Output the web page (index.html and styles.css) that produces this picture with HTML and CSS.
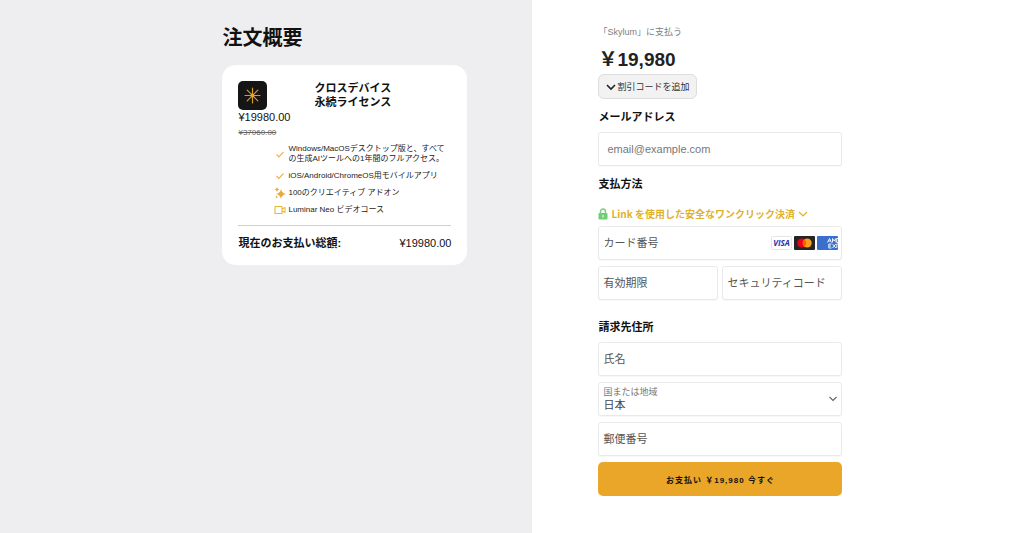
FILE: index.html
```html
<!DOCTYPE html>
<html lang="ja">
<head>
    <meta charset="UTF-8">
    <meta name="viewport" content="width=device-width, initial-scale=1.0">
    <title>注文概要</title>
    <link rel="stylesheet" href="styles.css">
</head>
<body>
    <section class="summary">
        <div class="summary-inner">
            <h1>注文概要</h1>
            <div class="card">
                <div class="product">
                    <svg class="logo" viewBox="0 0 29 29" aria-hidden="true">
                        <rect width="29" height="29" rx="5" fill="#151515"/>
                        <g stroke="#d99a26" stroke-width="1.2" stroke-linecap="round">
                            <path d="M14.5 7v15M7 14.5h15M9.2 9.2l10.6 10.6M19.8 9.2L9.2 19.8"/>
                        </g>
                        <circle cx="14.5" cy="14.5" r="2" fill="#e9a628"/>
                    </svg>
                    <h2>クロスデバイス<br>永続ライセンス</h2>
                </div>
                <div class="price">¥19980.00</div>
                <div class="old-price"><s>¥37060.00</s></div>
                <ul class="features">
                    <li>
                        <svg viewBox="0 0 12 12" aria-hidden="true"><path d="M2.5 6.5l2.3 2.3L9.5 4" fill="none" stroke="#eeb353" stroke-width="1.2"/></svg>
                        <span>Windows/MacOSデスクトップ版と、すべて<br>の生成AIツールへの1年間のフルアクセス。</span>
                    </li>
                    <li>
                        <svg viewBox="0 0 12 12" aria-hidden="true"><path d="M2.5 6l2.3 2.3L9.5 3.5" fill="none" stroke="#eeb353" stroke-width="1.2"/></svg>
                        <span>iOS/Android/ChromeOS用モバイルアプリ</span>
                    </li>
                    <li>
                        <svg viewBox="0 0 12 12" aria-hidden="true">
                            <g fill="#e8a93a">
                                <path d="M7 2Q7.8 6.200 12 7Q7.800 7.800 7 12Q6.200 7.800 2 7Q6.200 6.200 7 2z"/>
                                <path d="M3 0Q3.400 2.100 5.500 2.500Q3.400 2.900 3 5Q2.600 2.900 0.500 2.500Q2.600 2.100 3 0z"/>
                                <path d="M2.500 8.500Q2.700 9.800 4 10Q2.700 10.200 2.500 11.500Q2.300 10.200 1 10Q2.300 9.800 2.500 8.500z"/>
                            </g>
                        </svg>
                        <span>100のクリエイティブ アドオン</span>
                    </li>
                    <li>
                        <svg viewBox="0 0 12 12" aria-hidden="true"><path d="M1 2.500h7v7H1zM8 5l3-1.500v5L8 7" fill="none" stroke="#e6b83c" stroke-width="1.1" stroke-linejoin="round"/></svg>
                        <span>Luminar Neo ビデオコース</span>
                    </li>
                </ul>
                <div class="total">
                    <strong>現在のお支払い総額:</strong>
                    <span>¥19980.00</span>
                </div>
            </div>
        </div>
    </section>

    <main class="payment">
        <form class="payment-form">
            <p class="payee">「Skylum」に支払う</p>
            <p class="amount">￥19,980</p>
            <button type="button" class="discount">
                <svg viewBox="0 0 10 10" aria-hidden="true"><path d="M1 3l4 4 4-4" fill="none" stroke="#222" stroke-width="1.6"/></svg>
                割引コードを追加
            </button>

            <label class="heading" for="email">メールアドレス</label>
            <input class="field email" type="email" id="email" placeholder="email@example.com">

            <h3 class="heading">支払方法</h3>
            <button type="button" class="link-pay">
                <svg class="lock" viewBox="0 0 10 12" aria-hidden="true">
                    <path d="M2.500 6V3.500a2.500 2.500 0 0 1 5 0V6" fill="none" stroke="#7bd17f" stroke-width="1.500"/>
                    <rect x="0.500" y="5" width="9" height="6.500" rx="1" fill="#6fce74"/>
                    <path d="M5 7v2.500" stroke="#fff"/>
                </svg>
                Link を使用した安全なワンクリック決済
                <svg class="chevron" viewBox="0 0 10 10" aria-hidden="true"><path d="M1 3l4 4 4-4" fill="none" stroke="#dfb22c" stroke-width="1.200"/></svg>
            </button>
            <div class="fields">
                <div class="field-wrap">
                    <input class="field" type="text" placeholder="カード番号" aria-label="カード番号">
                    <div class="brands">
                        <svg viewBox="0 0 21 14" role="img" aria-label="Visa">
                            <rect x="0.500" y="0.500" width="20" height="13" rx="1" fill="#fff" stroke="#e6e6e6"/>
                            <text x="10.500" y="10" text-anchor="middle" class="visa-text">VISA</text>
                        </svg>
                        <svg viewBox="0 0 21 14" role="img" aria-label="Mastercard">
                            <rect width="21" height="14" rx="1" fill="#252525"/>
                            <circle cx="7.800" cy="7" r="4.500" fill="#eb001b"/>
                            <circle cx="13.200" cy="7" r="4.500" fill="#f79e1b"/>
                            <path d="M10.500 3.400a4.500 4.500 0 0 1 0 7.200a4.500 4.500 0 0 1 0-7.200z" fill="#ff5f00"/>
                        </svg>
                        <svg viewBox="0 0 21 14" role="img" aria-label="American Express">
                            <rect width="21" height="14" rx="1" fill="#3a70cc"/>
                            <g fill="none" stroke="#fff" stroke-width="0.900">
                                <path d="M10.500 6.500l2-4 2 4M11.300 5h2.400M15.500 6.500v-4l1.700 2.500 1.700-2.500v4M21 2.500h-1.200v4H21"/>
                                <path d="M14.500 8h-2.700v4h2.700M11.800 10h2.200M15.500 8l3.300 4M18.800 8l-3.300 4M21 8h-1.200v4"/>
                            </g>
                        </svg>
                    </div>
                </div>
                <div class="field-row">
                    <input class="field" type="text" placeholder="有効期限" aria-label="有効期限">
                    <input class="field" type="text" placeholder="セキュリティコード" aria-label="セキュリティコード">
                </div>
            </div>

            <h3 class="heading billing">請求先住所</h3>
            <div class="fields">
                <input class="field" type="text" placeholder="氏名" aria-label="氏名">
                <div class="field-wrap">
                    <label class="select-label" for="country">国または地域</label>
                    <select class="field country" id="country">
                        <option>日本</option>
                    </select>
                    <svg class="select-arrow" viewBox="0 0 10 10" aria-hidden="true"><path d="M1.500 3L5 6.500 8.500 3" fill="none" stroke="#666" stroke-width="1.200"/></svg>
                </div>
                <input class="field" type="text" placeholder="郵便番号" aria-label="郵便番号">
            </div>
            <button type="submit" class="submit">お支払い ￥19,980 今すぐ</button>
        </form>
    </main>
</body>
</html>
```

FILE: styles.css
```css
* {
    box-sizing: border-box;
}

body {
    margin: 0;
    min-height: 100vh;
    display: flex;
    font-family: "Liberation Sans", "Noto Sans CJK JP", sans-serif;
    background-color: #fff;
    color: #111;
}

h1, h2, h3, p, ul {
    margin: 0;
    padding: 0;
}

button, input, select {
    font-family: inherit;
}

svg {
    display: block;
    flex-shrink: 0;
}

/* order summary */
.summary {
    width: 52%;
    padding: 23px 65px 23px 20px;
    background-color: #eeeef0;
    display: flex;
    justify-content: flex-end;
}

.summary-inner {
    width: 100%;
    max-width: 245px;
}

h1 {
    font-size: 20px;
    line-height: 30px;
    font-weight: bold;
    margin-bottom: 12px;
}

.card {
    background-color: #fff;
    border-radius: 14px;
    padding: 16px 16px 15px;
}

.product {
    display: flex;
    gap: 47px;
}

.logo {
    width: 29px;
    height: 29px;
}

h2 {
    font-size: 11px;
    line-height: 14px;
    font-weight: bold;
}

.price {
    font-size: 11px;
    line-height: 15px;
}

.old-price {
    font-size: 8px;
    line-height: 16px;
    color: #666;
}

.features {
    list-style: none;
    margin: 3px 0 10px 36px;
    display: flex;
    flex-direction: column;
    gap: 7px;
}

.features li {
    display: flex;
    align-items: center;
    gap: 2px;
    font-size: 8px;
    line-height: 10px;
    color: #222;
    white-space: nowrap;
}

.features svg {
    width: 12px;
    height: 12px;
    margin: -1px 0;
}

.total {
    display: flex;
    justify-content: space-between;
    border-top: 1px solid #d0d0d0;
    padding-top: 10px;
    font-size: 11px;
    line-height: 14px;
}

.total strong {
    font-weight: bold;
}

/* payment form */
.payment {
    flex: 1;
    padding: 25px 20px 24px 66px;
}

.payment-form {
    max-width: 244px;
}

.payee {
    font-size: 9px;
    line-height: 14px;
    color: #808080;
}

.amount {
    font-size: 19px;
    line-height: 28px;
    font-weight: bold;
    color: #222;
    margin: 7px 0 0;
}

.discount {
    display: flex;
    align-items: center;
    gap: 1px;
    height: 25px;
    padding: 0 7px;
    border: 1px solid #ddd;
    border-radius: 6px;
    background-color: #f2f2f2;
    color: #333;
    font-size: 9px;
}

.discount svg {
    width: 10px;
    height: 10px;
}

.heading {
    display: block;
    font-size: 11px;
    line-height: 16px;
    font-weight: bold;
    margin: 10px 0 7px;
}

.field {
    display: block;
    width: 100%;
    min-width: 0;
    height: 34px;
    padding: 0 4px;
    border: 1px solid #e9e9e9;
    border-radius: 3px;
    box-shadow: 0 1px 1px rgba(0, 0, 0, 0.03);
    background-color: #fff;
    color: #444;
    font-size: 11px;
}

.field::placeholder {
    color: #555;
    opacity: 1;
}

.email {
    padding: 0 8px;
}

.email::placeholder {
    color: #777;
}

.link-pay {
    display: flex;
    align-items: center;
    gap: 3px;
    margin: 14px 0 4px;
    padding: 0;
    border: none;
    background: none;
    color: #dfb22c;
    font-family: "Noto Sans CJK JP", sans-serif;
    font-size: 10px;
    line-height: 16px;
    font-weight: bold;
    white-space: nowrap;
}

.lock {
    width: 10px;
    height: 12px;
}

.chevron {
    width: 10px;
    height: 10px;
}

.fields {
    display: flex;
    flex-direction: column;
    gap: 6px;
}

.field-wrap {
    position: relative;
}

.field-row {
    display: flex;
    gap: 4px;
}

.brands {
    position: absolute;
    top: 10px;
    right: 4px;
    display: flex;
    gap: 2px;
}

.brands svg {
    width: 21px;
    height: 14px;
}

.visa-text {
    font-family: "Open Sans", sans-serif;
    font-size: 8px;
    font-weight: bold;
    font-style: italic;
    fill: #2a2fa8;
}

.billing {
    margin-top: 19px;
}

.select-label {
    position: absolute;
    top: 4px;
    left: 5px;
    font-size: 9px;
    line-height: 12px;
    color: #777;
}

.country {
    appearance: none;
    padding: 12px 20px 0 4px;
}

.select-arrow {
    position: absolute;
    top: 12px;
    right: 4px;
    width: 10px;
    height: 10px;
}

.submit {
    display: block;
    width: 100%;
    height: 34px;
    margin-top: 6px;
    border: none;
    border-radius: 5px;
    background-color: #e9a628;
    color: #111;
    font-size: 8px;
    font-weight: bold;
    letter-spacing: 1px;
}
```
